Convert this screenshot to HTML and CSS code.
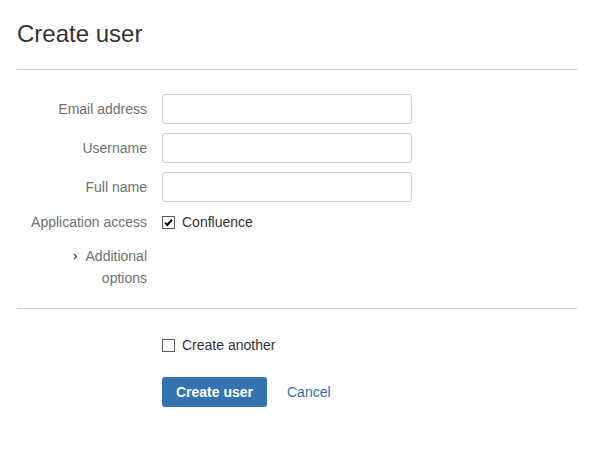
FILE: index.html
```html
<!DOCTYPE html>
<html>
<head>
<meta charset="utf-8">
<link rel="stylesheet" href="styles.css">
</head>
<body>
<div class="page">
  <h1 class="title">Create user</h1>
  <hr class="rule">
  <form class="form">
    <div class="row">
      <label class="label">Email address</label>
      <input class="field" type="text">
    </div>
    <div class="row">
      <label class="label">Username</label>
      <input class="field" type="text">
    </div>
    <div class="row">
      <label class="label">Full name</label>
      <input class="field" type="text">
    </div>
    <div class="row row-check">
      <span class="label">Application access</span>
      <span class="check-item">
        <span class="box"><svg width="11" height="11" viewBox="0 0 11 11"><path d="M2 5.6 L4.3 8 L9 2.6" fill="none" stroke="#000" stroke-width="2"/></svg></span>
        <span class="check-text">Confluence</span>
      </span>
    </div>
    <div class="row row-options">
      <span class="label options"><svg class="chev" width="5" height="7" viewBox="0 0 5 7"><path d="M1 1 L3.5 3.5 L1 6" fill="none" stroke="#555" stroke-width="1.4"/></svg> Additional<br>options</span>
    </div>
  </form>
  <hr class="rule rule-bottom">
  <div class="actions">
    <span class="check-item another">
      <span class="box"></span>
      <span class="check-text">Create another</span>
    </span>
    <div class="buttons">
      <button class="btn-primary" type="button">Create user</button>
      <a class="cancel" href="#">Cancel</a>
    </div>
  </div>
</div>
</body>
</html>
```

FILE: styles.css
```css
html, body {
  margin: 0;
  padding: 0;
  background: #fff;
}
body {
  font-family: "Liberation Sans", Arial, sans-serif;
  font-size: 14px;
  color: #333;
}
.page {
  width: 560px;
  padding-left: 17px;
  padding-top: 19px;
}
.title {
  margin: 0;
  font-size: 24px;
  font-weight: normal;
  line-height: 30px;
  color: #333;
}
.rule {
  border: 0;
  border-top: 1px solid #ccc;
  margin: 20px 0 0 0;
  height: 0;
}
.form {
  margin: 0;
  padding-top: 24px;
}
.row {
  display: grid;
  grid-template-columns: 130px 250px;
  column-gap: 15px;
  align-items: center;
  margin-bottom: 9px;
}
.label {
  text-align: right;
  color: #707070;
  line-height: 20px;
}
.field {
  box-sizing: border-box;
  width: 250px;
  height: 30px;
  border: 1px solid #ccc;
  border-radius: 3px;
  margin: 0;
  padding: 4px 5px;
  font: inherit;
  background: #fff;
}
.row-check {
  margin-top: 10px;
  margin-bottom: 13px;
}
.check-item {
  display: flex;
  align-items: center;
  gap: 7px;
  line-height: 20px;
  color: #333;
}
.box {
  box-sizing: border-box;
  width: 13px;
  height: 13px;
  border: 1px solid #5a5a5a;
  display: flex;
  align-items: center;
  justify-content: center;
  background: #fff;
}
.box svg {
  display: block;
}
.options {
  line-height: 22px;
}
.chev {
  vertical-align: 1px;
  margin-right: 4px;
}
.row-options {
  margin-bottom: 0;
}
.rule-bottom {
  margin-top: 19px;
}
.actions {
  padding-left: 145px;
  padding-top: 26px;
}
.another {
  height: 20px;
}
.buttons {
  display: flex;
  align-items: center;
  gap: 20px;
  margin-top: 22px;
}
.btn-primary {
  height: 30px;
  width: 105px;
  border: 0;
  border-radius: 3px;
  background: #3572b0;
  color: #fff;
  font: bold 14px "Liberation Sans", Arial, sans-serif;
  padding: 0;
}
.cancel {
  color: #3572b0;
  text-decoration: none;
}
```
